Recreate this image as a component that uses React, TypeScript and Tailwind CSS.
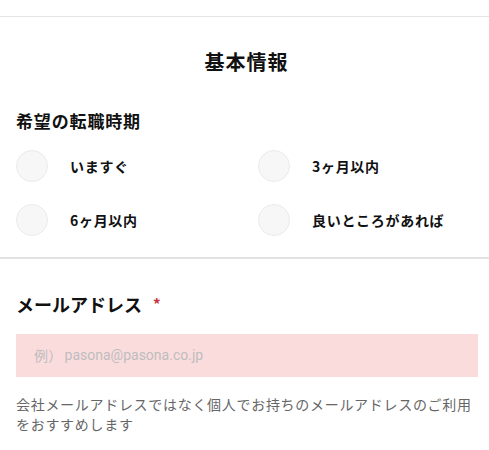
import React from "react";

const OPTIONS = ["いますぐ", "3ヶ月以内", "6ヶ月以内", "良いところがあれば"];

const JP = "font-['Noto_Sans_CJK_JP','Noto_Sans',sans-serif]";

export default function App() {
  return (
    <div className={`w-[489px] h-[450px] overflow-hidden bg-white text-[#111] ${JP}`}>
      <div className="h-4" />
      <div className="border-t border-[#e6e6e6]" />

      <h2 className="mt-[31px] pl-1 text-center text-[20px] leading-[28px] font-bold tracking-[0.05em]">
        基本情報
      </h2>

      <h3 className="mt-[33px] px-4 text-[17px] leading-[24px] font-bold tracking-[0.05em]">
        希望の転職時期
      </h3>

      <div className="mt-[17px] px-4 grid grid-cols-[242px_1fr] gap-y-[22px]">
        {OPTIONS.map((label) => (
          <label key={label} className="flex items-center h-8 gap-[22px]">
            <span className="w-8 h-8 rounded-full bg-[#f7f7f7] border border-[#ebebeb] shrink-0" />
            <span className="text-[14px] font-bold tracking-[0.05em]">{label}</span>
          </label>
        ))}
      </div>

      <div className="mt-[21px] h-[2px] bg-[#e2e2e2]" />

      <div className="mt-8 px-4 flex items-center h-[26px]">
        <span className="text-[18px] leading-[26px] font-bold">メールアドレス</span>
        <span className="ml-[11px] text-[15px] font-bold text-[#c8323c]">*</span>
      </div>

      <div className="mt-[17px] ml-4 mr-[11px] h-[43px] bg-[#fbdcdd] flex items-center pl-[18px]">
        <span className="text-[14px] text-[#bdbdbd] tracking-[0.02em]">例）</span>
        <span className="ml-[2px] text-[14px] text-[#bdbdbd] font-['Roboto',sans-serif]">
          pasona@pasona.co.jp
        </span>
      </div>

      <p className="mt-[17px] pl-4 pr-[11px] text-[14px] leading-[20px] text-[#666] tracking-[0.05em]">
        会社メールアドレスではなく個人でお持ちのメールアドレスのご利用をおすすめします
      </p>
    </div>
  );
}
